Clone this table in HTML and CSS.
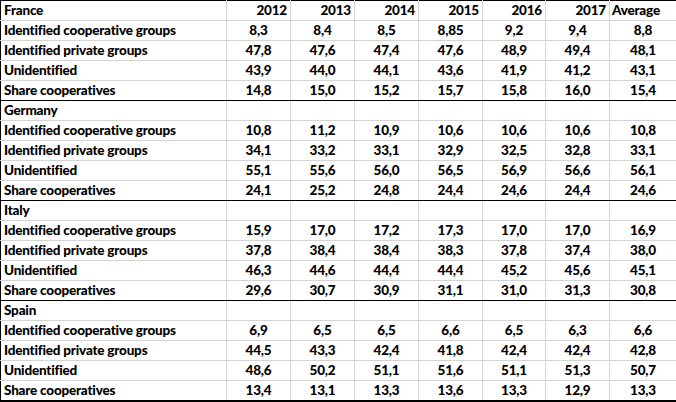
FILE: index.html
```html
<!DOCTYPE html>
<html lang="en">
<head>
<meta charset="utf-8">
<title>Cooperative groups share</title>
<link rel="stylesheet" href="styles.css">
</head>
<body>
<table class="data">
<colgroup>
<col class="c-label"><col class="c-y"><col class="c-y"><col class="c-y"><col class="c-y"><col class="c-y5"><col class="c-y"><col class="c-avg">
</colgroup>
<tbody>
<tr class="head"><td class="lbl">France</td><td class="yr">2012</td><td class="yr">2013</td><td class="yr">2014</td><td class="yr">2015</td><td class="yr">2016</td><td class="yr">2017</td><td class="avg">Average</td></tr>
<tr><td class="lbl">Identified cooperative groups</td><td>8,3</td><td>8,4</td><td>8,5</td><td>8,85</td><td>9,2</td><td>9,4</td><td>8,8</td></tr>
<tr><td class="lbl">Identified private groups</td><td>47,8</td><td>47,6</td><td>47,4</td><td>47,6</td><td>48,9</td><td>49,4</td><td>48,1</td></tr>
<tr><td class="lbl">Unidentified</td><td>43,9</td><td>44,0</td><td>44,1</td><td>43,6</td><td>41,9</td><td>41,2</td><td>43,1</td></tr>
<tr class="end"><td class="lbl">Share cooperatives</td><td>14,8</td><td>15,0</td><td>15,2</td><td>15,7</td><td>15,8</td><td>16,0</td><td>15,4</td></tr>

<tr class="head"><td class="lbl">Germany</td><td></td><td></td><td></td><td></td><td></td><td></td><td></td></tr>
<tr><td class="lbl">Identified cooperative groups</td><td>10,8</td><td>11,2</td><td>10,9</td><td>10,6</td><td>10,6</td><td>10,6</td><td>10,8</td></tr>
<tr><td class="lbl">Identified private groups</td><td>34,1</td><td>33,2</td><td>33,1</td><td>32,9</td><td>32,5</td><td>32,8</td><td>33,1</td></tr>
<tr><td class="lbl">Unidentified</td><td>55,1</td><td>55,6</td><td>56,0</td><td>56,5</td><td>56,9</td><td>56,6</td><td>56,1</td></tr>
<tr class="end"><td class="lbl">Share cooperatives</td><td>24,1</td><td>25,2</td><td>24,8</td><td>24,4</td><td>24,6</td><td>24,4</td><td>24,6</td></tr>

<tr class="head"><td class="lbl">Italy</td><td></td><td></td><td></td><td></td><td></td><td></td><td></td></tr>
<tr><td class="lbl">Identified cooperative groups</td><td>15,9</td><td>17,0</td><td>17,2</td><td>17,3</td><td>17,0</td><td>17,0</td><td>16,9</td></tr>
<tr><td class="lbl">Identified private groups</td><td>37,8</td><td>38,4</td><td>38,4</td><td>38,3</td><td>37,8</td><td>37,4</td><td>38,0</td></tr>
<tr><td class="lbl">Unidentified</td><td>46,3</td><td>44,6</td><td>44,4</td><td>44,4</td><td>45,2</td><td>45,6</td><td>45,1</td></tr>
<tr class="end"><td class="lbl">Share cooperatives</td><td>29,6</td><td>30,7</td><td>30,9</td><td>31,1</td><td>31,0</td><td>31,3</td><td>30,8</td></tr>

<tr class="head"><td class="lbl">Spain</td><td></td><td></td><td></td><td></td><td></td><td></td><td></td></tr>
<tr><td class="lbl">Identified cooperative groups</td><td>6,9</td><td>6,5</td><td>6,5</td><td>6,6</td><td>6,5</td><td>6,3</td><td>6,6</td></tr>
<tr><td class="lbl">Identified private groups</td><td>44,5</td><td>43,3</td><td>42,4</td><td>41,8</td><td>42,4</td><td>42,4</td><td>42,8</td></tr>
<tr><td class="lbl">Unidentified</td><td>48,6</td><td>50,2</td><td>51,1</td><td>51,6</td><td>51,1</td><td>51,3</td><td>50,7</td></tr>
<tr class="end"><td class="lbl">Share cooperatives</td><td>13,4</td><td>13,1</td><td>13,3</td><td>13,6</td><td>13,3</td><td>12,9</td><td>13,3</td></tr>
</tbody>
</table>
</body>
</html>
```
FILE: styles.css
```css
html, body {
  margin: 0;
  padding: 0;
  background: #ffffff;
}
.data {
  border-collapse: collapse;
  table-layout: fixed;
  width: 676px;
  font-family: Lato, "Liberation Sans", sans-serif;
  font-weight: 900;
  font-size: 13.5px;
  letter-spacing: -0.2px;
  color: #000000;
  border: 1px solid #000000;
  border-bottom-width: 2px;
}
.c-label { width: 226px; }
.c-y { width: 64px; }
.c-y5 { width: 63px; }
.c-avg { width: 67px; }
.data td {
  height: 19px;
  padding: 0 2px;
  border: 1px solid #d4d4d4;
  text-align: center;
  white-space: nowrap;
  overflow: visible;
  line-height: 19px;
  vertical-align: middle;
}
.data td.lbl {
  text-align: left;
  padding-left: 3px;
  border-left: 1px solid #000000;
}
.data td:last-child {
  border-right: 1px solid #000000;
}
.data tr:first-child td {
  border-top: 1px solid #000000;
}
.data tr.end td {
  border-bottom: 1px solid #000000;
}
.data td.yr {
  text-align: right;
  padding-right: 3px;
}
.data td.avg {
  text-align: left;
  padding-left: 2px;
}
```
